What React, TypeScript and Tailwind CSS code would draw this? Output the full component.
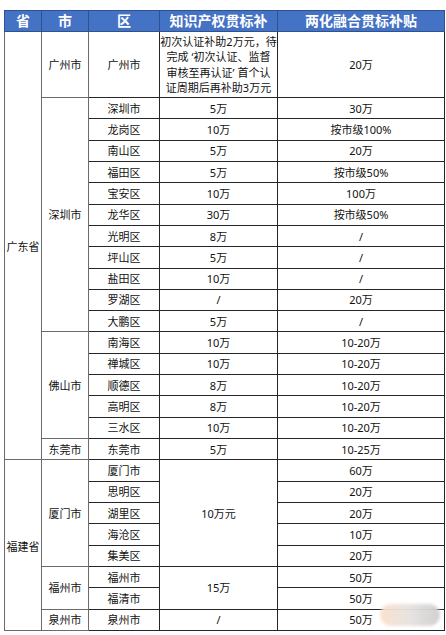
import React from "react";

type Span = { text: string; span: number };
type Row = {
  prov?: Span;
  city?: Span;
  dist: string;
  ip?: Span;
  fuse: string;
};

const rows: Row[] = [
  { city: { text: "深圳市", span: 11 }, dist: "深圳市", ip: { text: "5万", span: 1 }, fuse: "30万" },
  { dist: "龙岗区", ip: { text: "10万", span: 1 }, fuse: "按市级100%" },
  { dist: "南山区", ip: { text: "5万", span: 1 }, fuse: "20万" },
  { dist: "福田区", ip: { text: "5万", span: 1 }, fuse: "按市级50%" },
  { dist: "宝安区", ip: { text: "10万", span: 1 }, fuse: "100万" },
  { dist: "龙华区", ip: { text: "30万", span: 1 }, fuse: "按市级50%" },
  { dist: "光明区", ip: { text: "8万", span: 1 }, fuse: "/" },
  { dist: "坪山区", ip: { text: "5万", span: 1 }, fuse: "/" },
  { dist: "盐田区", ip: { text: "10万", span: 1 }, fuse: "/" },
  { dist: "罗湖区", ip: { text: "/", span: 1 }, fuse: "20万" },
  { dist: "大鹏区", ip: { text: "5万", span: 1 }, fuse: "/" },
  { city: { text: "佛山市", span: 5 }, dist: "南海区", ip: { text: "10万", span: 1 }, fuse: "10-20万" },
  { dist: "禅城区", ip: { text: "10万", span: 1 }, fuse: "10-20万" },
  { dist: "顺德区", ip: { text: "8万", span: 1 }, fuse: "10-20万" },
  { dist: "高明区", ip: { text: "8万", span: 1 }, fuse: "10-20万" },
  { dist: "三水区", ip: { text: "10万", span: 1 }, fuse: "10-20万" },
  { city: { text: "东莞市", span: 1 }, dist: "东莞市", ip: { text: "5万", span: 1 }, fuse: "10-25万" },
  { prov: { text: "福建省", span: 8 }, city: { text: "厦门市", span: 5 }, dist: "厦门市", ip: { text: "10万元", span: 5 }, fuse: "60万" },
  { dist: "思明区", fuse: "20万" },
  { dist: "湖里区", fuse: "20万" },
  { dist: "海沧区", fuse: "10万" },
  { dist: "集美区", fuse: "20万" },
  { city: { text: "福州市", span: 2 }, dist: "福州市", ip: { text: "15万", span: 2 }, fuse: "50万" },
  { dist: "福清市", fuse: "50万" },
  { city: { text: "泉州市", span: 1 }, dist: "泉州市", ip: { text: "/", span: 1 }, fuse: "50万" },
];

const gray = "border border-[#6b6b6b]";
const dark = "border border-[#262626]";

export default function App() {
  return (
    <div
      className="relative w-[446px] h-[635px] bg-white text-[#111] overflow-hidden"
      style={{ fontFamily: "'Noto Sans', 'Noto Sans CJK SC', sans-serif" }}
    >
      <div className="pt-[10px] pl-[4px]">
        <table className="border-collapse table-fixed w-[440px] text-[11px] leading-none text-center">
          <colgroup>
            <col className="w-[37px]" />
            <col className="w-[47px]" />
            <col className="w-[71px]" />
            <col className="w-[118px]" />
            <col className="w-[167px]" />
          </colgroup>
          <thead>
            <tr className="h-[21px] bg-[#4472c4] text-white font-bold text-[14px]">
              <th className="border border-[#2f528f] p-0 font-bold">省</th>
              <th className="border border-[#2f528f] p-0 font-bold">市</th>
              <th className="border border-[#2f528f] p-0 font-bold">区</th>
              <th className="border border-[#2f528f] p-0 font-bold whitespace-nowrap overflow-hidden">知识产权贯标补</th>
              <th className="border border-[#2f528f] p-0 font-bold whitespace-nowrap">两化融合贯标补贴</th>
            </tr>
          </thead>
          <tbody>
            <tr className="h-[66px]">
              <td rowSpan={18} className={`${gray} p-0 align-middle pt-[2px]`}>广东省</td>
              <td className={`${gray} p-0`}>广州市</td>
              <td className={`${dark} p-0`}>广州市</td>
              <td className={`${dark} p-0 text-[11px] leading-[15.5px] whitespace-nowrap`}>
                初次认证补助2万元，待
                <br />
                完成 ‘初次认证、监督
                <br />
                审核至再认证’ 首个认
                <br />
                证周期后再补助3万元
              </td>
              <td className={`${dark} p-0`}>20万</td>
            </tr>
            {rows.map((r, i) => (
              <tr key={i} className="h-[21.32px]">
                {r.prov && (
                  <td rowSpan={r.prov.span} className={`${gray} p-0 align-middle pt-[2px]`}>
                    {r.prov.text}
                  </td>
                )}
                {r.city && (
                  <td rowSpan={r.city.span} className={`${gray} p-0`}>
                    {r.city.text}
                  </td>
                )}
                <td className={`${dark} p-0`}>{r.dist}</td>
                {r.ip && (
                  <td rowSpan={r.ip.span} className={`${dark} p-0`}>
                    {r.ip.text}
                  </td>
                )}
                <td className={`${dark} p-0`}>{r.fuse}</td>
              </tr>
            ))}
          </tbody>
        </table>
      </div>
      <div className="absolute left-[380px] top-[604px] w-[60px] h-[22px] rounded-full bg-gradient-to-r from-[#fbe0cc] via-[#e6e2e0] to-[#cfcfcf] blur-[1.5px] opacity-95" />
    </div>
  );
}
